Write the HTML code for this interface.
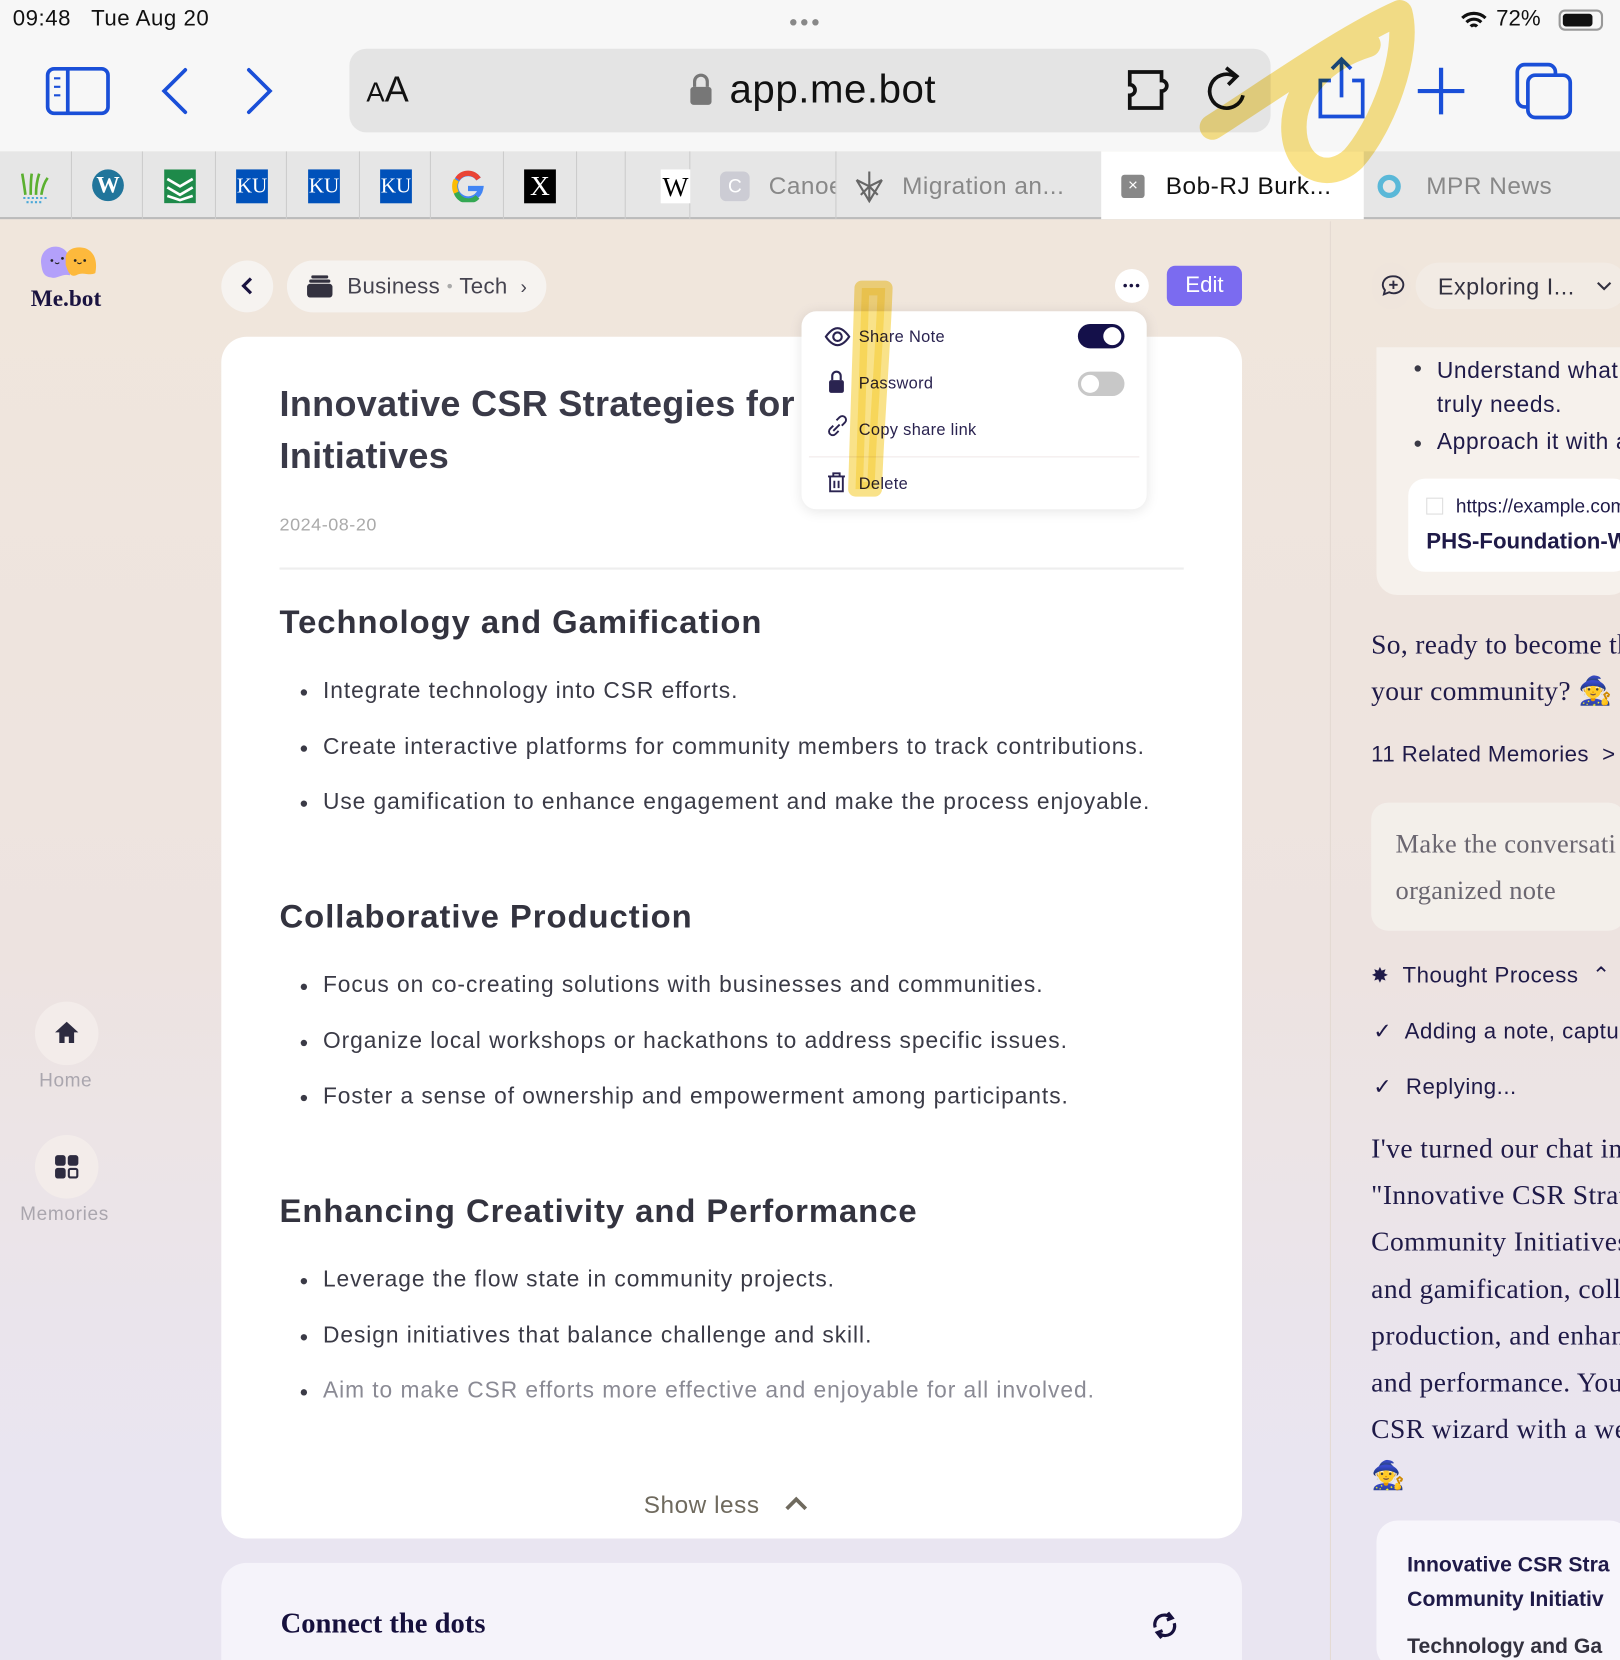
<!DOCTYPE html>
<html><head><meta charset="utf-8"><style>
*{margin:0;padding:0;box-sizing:border-box}
html,body{width:1620px;height:1660px;overflow:hidden;background:#f0e6dc}
#w{position:absolute;left:0;top:0;width:1530px;height:1568px;transform:scale(1.058824);transform-origin:0 0;font-family:"Liberation Sans",sans-serif;overflow:hidden;background:linear-gradient(#f0e6dc 220px,#ede3e0 900px,#e9e5f1 1400px)}
.a{position:absolute}
.ser{font-family:"Liberation Serif",serif}
.b{position:absolute;font-size:21.5px;color:#3a3a46;letter-spacing:.9px;white-space:nowrap}
.b:before{content:"";position:absolute;left:-21px;top:11px;width:6px;height:6px;border-radius:50%;background:#3a3a46}
.h{position:absolute;left:264px;font-size:31px;font-weight:bold;color:#33333f;letter-spacing:.9px}
.mi{position:absolute;left:811px;font-size:15.5px;color:#2a2350;letter-spacing:.3px}
</style></head><body><div id="w">
<div class="a" style="left:0;top:0;width:1530px;height:143px;background:#f7f7f7"></div>
<div class="a" style="left:12px;top:6px;font-size:21px;color:#111;letter-spacing:.5px">09:48&nbsp;&nbsp;&nbsp;Tue Aug 20</div>
<div class="a" style="left:745px;top:12px;font-size:14px;color:#888;letter-spacing:2px">●●●</div>
<div class="a" style="left:1413px;top:6px;font-size:21px;color:#111">72%</div>
<svg class="a" style="left:1378px;top:8px" width="30" height="22"><path d="M3 9a16 16 0 0 1 22 0M7 13a10 10 0 0 1 14 0M11 17a4 4 0 0 1 6 0" stroke="#111" stroke-width="3" fill="none"/></svg>
<div class="a" style="left:1472px;top:9px;width:42px;height:20px;border:2px solid #999;border-radius:6px"><div style="margin:2px;width:28px;height:12px;background:#111;border-radius:3px"></div></div>
<svg class="a" style="left:40px;top:60px" width="460" height="60">
<rect x="5" y="5" width="57" height="42" rx="6" stroke="#1a4fd8" stroke-width="3.5" fill="none"/><line x1="24" y1="5" x2="24" y2="47" stroke="#1a4fd8" stroke-width="3.5"/><path d="M11 14h6M11 22h6M11 30h6" stroke="#1a4fd8" stroke-width="2"/>
<path d="M135 6l-20 20 20 20M195 6l20 20-20 20" stroke="#1a4fd8" stroke-width="3.5" fill="none" stroke-linecap="round"/></svg>
<div class="a" style="left:330px;top:46px;width:870px;height:79px;background:#e4e4e4;border-radius:16px"></div>
<div class="a" style="left:346px;top:66px;font-size:34px;color:#111"><span style="font-size:26px">A</span>A</div>
<svg class="a" style="left:651px;top:68px" width="22" height="32"><path d="M5 14V9a6 6 0 0 1 12 0v5" stroke="#777" stroke-width="3" fill="none"/><rect x="1" y="14" width="20" height="17" rx="3" fill="#777"/></svg>
<div class="a" style="left:689px;top:64px;font-size:38px;color:#111;letter-spacing:.5px">app.me.bot</div>
<svg class="a" style="left:1060px;top:58px" width="130" height="52"><path d="M7 10h30v8a5 5 0 0 1 0 10v16H7V32a5 5 0 0 0 0-10z" stroke="#111" stroke-width="3.5" fill="none"/><path d="M114 32a16 16 0 1 1-8-18" stroke="#111" stroke-width="3.5" fill="none"/><path d="M98 6l10 8-8 8" stroke="#111" stroke-width="3.5" fill="none"/></svg>
<svg class="a" style="left:1240px;top:52px" width="260" height="64"><path d="M17 24H7v34h40V24H37M27 40V4M18 13l9-9 9 9" stroke="#1a4fd8" stroke-width="3.5" fill="none"/><path d="M121 12v44M99 34h44" stroke="#1a4fd8" stroke-width="4"/><rect x="193" y="9" width="36" height="40" rx="7" stroke="#1a4fd8" stroke-width="3.5" fill="none"/><rect x="203" y="19" width="40" height="40" rx="7" stroke="#1a4fd8" stroke-width="3.5" fill="#f7f7f7"/></svg>
<div class="a" style="left:0;top:143px;width:1530px;height:64px;background:#e6e6e6;border-bottom:2px solid #bbb"></div>
<div class="a" style="left:1040px;top:143px;width:248px;height:64px;background:#fff"></div>
<div class="a" style="top:143px;height:64px;left:67px;border-left:1px solid #ccc;width:68px;border-right:1px solid #ccc"></div>
<div class="a" style="top:143px;height:64px;left:203px;border-left:1px solid #ccc;width:68px;border-right:1px solid #ccc"></div>
<div class="a" style="top:143px;height:64px;left:339px;border-left:1px solid #ccc;width:68px;border-right:1px solid #ccc"></div>
<div class="a" style="top:143px;height:64px;left:475px;border-left:1px solid #ccc;width:70px;border-right:1px solid #ccc"></div>
<div class="a" style="top:143px;height:64px;left:590px;border-left:1px solid #ccc;width:62px;border-right:1px solid #ccc"></div>
<div class="a" style="top:143px;height:64px;left:789px;border-left:1px solid #ccc;width:1px"></div>
<svg class="a" style="left:18px;top:158px" width="32" height="36"><path d="M6 26C5 18 4 12 3 6M11 26c0-8 0-14 1-20M16 26c0-8 1-14 3-20M21 26c1-6 3-12 6-16" stroke="#5bb030" stroke-width="2.5" fill="none"/><path d="M4 29h22M7 33h16" stroke="#4aa8d8" stroke-width="2" stroke-dasharray="2 2"/></svg>
<div class="a" style="left:87px;top:160px;width:30px;height:30px;border-radius:50%;background:#21759b;color:#fff;font:bold 22px 'Liberation Serif';text-align:center;line-height:30px">W</div>
<svg class="a" style="left:155px;top:160px" width="30" height="32"><rect width="30" height="32" fill="#1e8a4a"/><path d="M3 9l12 7 12-7M3 17l12 7 12-7M3 25l12 4 12-4" stroke="#fff" stroke-width="2.5" fill="none"/></svg>
<div class="a" style="left:223px;top:160px;width:30px;height:32px;background:#0051ba;color:#fff;font:20px 'Liberation Serif';text-align:center;line-height:32px">KU</div>
<div class="a" style="left:291px;top:160px;width:30px;height:32px;background:#0051ba;color:#fff;font:20px 'Liberation Serif';text-align:center;line-height:32px">KU</div>
<div class="a" style="left:359px;top:160px;width:30px;height:32px;background:#0051ba;color:#fff;font:20px 'Liberation Serif';text-align:center;line-height:32px">KU</div>
<svg class="a" style="left:427px;top:161px" width="30" height="30"><path d="M25 8A12 12 0 1 0 27 17H15" stroke="#4285f4" stroke-width="5" fill="none"/><path d="M25 8A12 12 0 0 0 5 8" stroke="#ea4335" stroke-width="5" fill="none"/><path d="M4 9a12 12 0 0 0 0 12" stroke="#fbbc05" stroke-width="5" fill="none"/><path d="M4 21a12 12 0 0 0 20 4" stroke="#34a853" stroke-width="5" fill="none"/></svg>
<div class="a" style="left:495px;top:160px;width:30px;height:32px;background:#000;color:#fff;font:26px 'Liberation Serif';text-align:center;line-height:32px">X</div>
<div class="a" style="left:624px;top:160px;width:28px;height:32px;background:#fff;color:#000;font:26px 'Liberation Serif';text-align:center;line-height:34px">W</div>
<div class="a" style="left:680px;top:162px;width:28px;height:28px;background:#ccccd4;border-radius:6px;color:#fff;text-align:center;line-height:28px;font-size:18px">C</div>
<div class="a" style="left:726px;top:162px;font-size:23px;color:#888;width:63px;overflow:hidden;white-space:nowrap;letter-spacing:.5px">Canoe</div>
<svg class="a" style="left:806px;top:160px" width="30" height="32"><path d="M15 2v28M3 10l12 20 12-20M3 10l12 6 12-6M7 24l8-8 8 8" stroke="#666" stroke-width="2" fill="none"/></svg>
<div class="a" style="left:852px;top:162px;font-size:23px;color:#888;letter-spacing:.5px">Migration an...</div>
<div class="a" style="left:1059px;top:165px;width:22px;height:22px;background:#888;border-radius:3px;color:#fff;text-align:center;font-size:16px;line-height:22px">×</div>
<div class="a" style="left:1101px;top:162px;font-size:23px;color:#111;letter-spacing:.5px">Bob-RJ Burk...</div>
<div class="a" style="left:1301px;top:165px;width:22px;height:22px;border:5px solid #5ab8d8;border-radius:50%"></div>
<div class="a" style="left:1347px;top:162px;font-size:23px;color:#888;letter-spacing:.5px">MPR News</div>
<div class="a" style="left:1256px;top:209px;width:1px;height:1360px;background:#e4dad2"></div>
<svg class="a" style="left:32px;top:232px" width="64" height="38"><path d="M7 18C5 6 14 0 22 1 32 2 36 12 34 28 26 26 22 32 16 30 10 29 8 26 7 18z" fill="#b3a0fa"/><path d="M30 10C32 2 42 0 50 3 58 7 60 16 58 26 52 29 46 24 40 28 34 30 32 24 30 18z" fill="#fdb93c"/><circle cx="17" cy="14" r="1.3" fill="#222"/><circle cx="27" cy="12" r="1.3" fill="#222"/><circle cx="39" cy="14" r="1.3" fill="#222"/><circle cx="48" cy="14" r="1.3" fill="#222"/><path d="M20 16q2 2 4 0M41 16q2 2 4 0" stroke="#222" stroke-width="1" fill="none"/></svg>
<div class="a ser" style="left:29px;top:269px;font-size:22px;font-weight:bold;color:#1a1340">Me.bot</div>
<div class="a" style="left:33px;top:946px;width:60px;height:60px;border-radius:50%;background:#f3ecea"></div>
<svg class="a" style="left:51px;top:963px" width="24" height="24"><path d="M12 2L1 12h4v10h5v-6h4v6h5V12h4z" fill="#2d2b40"/></svg>
<div class="a" style="left:37px;top:1010px;font-size:18px;color:#aaa6ae;letter-spacing:.5px">Home</div>
<div class="a" style="left:33px;top:1072px;width:60px;height:60px;border-radius:50%;background:#f3ecea"></div>
<svg class="a" style="left:51px;top:1090px" width="24" height="24"><rect x="1" y="1" width="10" height="10" rx="2.5" fill="#2d2b40"/><rect x="13" y="1" width="10" height="10" rx="2.5" fill="#2d2b40"/><rect x="1" y="13" width="10" height="10" rx="2.5" fill="#2d2b40"/><rect x="14" y="14" width="8" height="8" rx="1.5" stroke="#2d2b40" stroke-width="2" fill="none"/></svg>
<div class="a" style="left:19px;top:1136px;font-size:18px;color:#aaa6ae;letter-spacing:.6px">Memories</div>
<div class="a" style="left:209px;top:246px;width:49px;height:49px;border-radius:50%;background:#f6f3f0"></div>
<svg class="a" style="left:226px;top:260px" width="16" height="20"><path d="M11 3l-7 7 7 7" stroke="#1a1340" stroke-width="3" fill="none"/></svg>
<div class="a" style="left:271px;top:246px;width:245px;height:49px;border-radius:25px;background:#f6f3f0"></div>
<svg class="a" style="left:289px;top:260px" width="26" height="22"><rect x="5" y="0" width="16" height="3" rx="1.5" fill="#33313f"/><rect x="3" y="4" width="20" height="3" rx="1.5" fill="#33313f"/><rect x="1" y="8" width="24" height="13" rx="3" fill="#33313f"/></svg>
<div class="a" style="left:328px;top:259px;font-size:21px;color:#45434f;letter-spacing:.3px">Business <span style="color:#aaa;font-size:10px;vertical-align:4px">●</span> Tech <span style="font-size:18px;margin-left:6px">›</span></div>
<div class="a" style="left:1053px;top:254px;width:32px;height:32px;border-radius:50%;background:#fff;text-align:center;font-size:8px;line-height:32px;color:#1a1340;letter-spacing:1px">●●●</div>
<div class="a" style="left:1102px;top:251px;width:71px;height:38px;border-radius:8px;background:#7b6bf0;color:#fff;font-size:21px;text-align:center;line-height:38px">Edit</div>
<div class="a" style="left:209px;top:318px;width:964px;height:1135px;background:#fff;border-radius:24px"></div>
<div class="a" style="left:264px;top:358px;font-size:34px;font-weight:bold;color:#3a3a48;line-height:49px;letter-spacing:.3px">Innovative CSR Strategies for Community<br>Initiatives</div>
<div class="a" style="left:264px;top:486px;font-size:17px;color:#aaa;letter-spacing:.5px">2024-08-20</div>
<div class="a" style="left:264px;top:536px;width:854px;height:2px;background:#eee"></div>
<div class="h" style="top:570px">Technology and Gamification</div>
<div class="b" style="left:305px;top:640px">Integrate technology into CSR efforts.</div>
<div class="b" style="left:305px;top:693px">Create interactive platforms for community members to track contributions.</div>
<div class="b" style="left:305px;top:745px">Use gamification to enhance engagement and make the process enjoyable.</div>
<div class="h" style="top:848px">Collaborative Production</div>
<div class="b" style="left:305px;top:918px">Focus on co-creating solutions with businesses and communities.</div>
<div class="b" style="left:305px;top:971px">Organize local workshops or hackathons to address specific issues.</div>
<div class="b" style="left:305px;top:1023px">Foster a sense of ownership and empowerment among participants.</div>
<div class="h" style="top:1126px">Enhancing Creativity and Performance</div>
<div class="b" style="left:305px;top:1196px">Leverage the flow state in community projects.</div>
<div class="b" style="left:305px;top:1249px">Design initiatives that balance challenge and skill.</div>
<div class="b" style="left:305px;top:1301px;color:#8a8a94">Aim to make CSR efforts more effective and enjoyable for all involved.</div>
<div class="a" style="left:608px;top:1408px;font-size:23px;color:#6f6a5e;letter-spacing:.5px">Show less</div>
<svg class="a" style="left:740px;top:1410px" width="24" height="20"><path d="M3 15l9-9 9 9" stroke="#6f6a5e" stroke-width="3.5" fill="none"/></svg>
<div class="a" style="left:209px;top:1476px;width:964px;height:120px;background:#f5f3fa;border-radius:24px"></div>
<div class="a ser" style="left:265px;top:1518px;font-size:27px;font-weight:bold;color:#16103d">Connect the dots</div>
<svg class="a" style="left:1086px;top:1520px" width="28" height="30"><path d="M5 17a9 9 0 0 1 15-9M23 13a9 9 0 0 1-15 9" stroke="#16103d" stroke-width="3" fill="none"/><path d="M17 3l4 5-5 2M11 27l-4-5 5-2" stroke="#16103d" stroke-width="3" fill="none"/></svg>
<div class="a" style="left:757px;top:294px;width:326px;height:187px;background:#fff;border-radius:14px;box-shadow:0 2px 12px rgba(0,0,0,.1)"></div>
<svg class="a" style="left:778px;top:307px" width="26" height="170"><path d="M2 11s5-8 11-8 11 8 11 8-5 8-11 8-11-8-11-8z" stroke="#2a2350" stroke-width="2" fill="none"/><circle cx="13" cy="11" r="4" stroke="#2a2350" stroke-width="2" fill="none"/><rect x="5" y="52" width="14" height="12" rx="2" fill="#2a2350"/><path d="M8 52v-4a4 4 0 0 1 8 0v4" stroke="#2a2350" stroke-width="2" fill="none"/><path d="M9 100l6-6m-3-4l3-3a3 3 0 0 1 5 5l-3 3m-8 0l-3 3a3 3 0 0 0 5 5l3-3" stroke="#2a2350" stroke-width="1.8" fill="none"/><path d="M4 143h16M9 143v-3h6v3M6 143v14h12v-14M10 147v7M14 147v7" stroke="#2a2350" stroke-width="1.8" fill="none"/></svg>
<div class="mi" style="top:310px">Share Note</div>
<div class="mi" style="top:354px">Password</div>
<div class="mi" style="top:398px">Copy share link</div>
<div class="mi" style="top:449px">Delete</div>
<div class="a" style="left:764px;top:431px;width:312px;height:1px;background:#f0e8e8"></div>
<div class="a" style="left:1018px;top:306px;width:44px;height:23px;border-radius:12px;background:#14104a"><div style="position:absolute;right:3px;top:3px;width:17px;height:17px;border-radius:50%;background:#fff"></div></div>
<div class="a" style="left:1018px;top:351px;width:44px;height:23px;border-radius:12px;background:#c8c8c8"><div style="position:absolute;left:3px;top:3px;width:17px;height:17px;border-radius:50%;background:#fff"></div></div>
<div class="a" style="left:1296px;top:248px;width:36px;height:44px;border-radius:18px;background:#efe5dc"></div>
<svg class="a" style="left:1304px;top:259px" width="24" height="22"><path d="M12 2a9 8 0 1 1-4 15l-5 2 1-4a9 8 0 0 1 8-13zM12 6v8M8 10h8" stroke="#2d2b40" stroke-width="1.8" fill="none"/></svg>
<div class="a" style="left:1337px;top:248px;width:200px;height:44px;border-radius:22px;background:#f2ebe4"></div>
<div class="a" style="left:1358px;top:258px;font-size:22px;color:#33313f;letter-spacing:.5px">Exploring I...</div>
<svg class="a" style="left:1507px;top:264px" width="16" height="12"><path d="M2 3l6 6 6-6" stroke="#33313f" stroke-width="2" fill="none"/></svg>
<div class="a" style="left:1300px;top:328px;width:240px;height:234px;background:#f6f1ec;border-radius:0 0 20px 20px"></div>
<div class="b" style="left:1357px;top:334px;color:#1f1a48;line-height:32px;letter-spacing:.6px">Understand what<br>truly needs.</div>
<div class="b" style="left:1357px;top:405px;color:#1f1a48;letter-spacing:.6px">Approach it with a</div>
<div class="a" style="left:1330px;top:452px;width:210px;height:88px;background:#fff;border-radius:16px"></div>
<div class="a" style="left:1347px;top:470px;width:16px;height:16px;border:1px solid #ddd"></div>
<div class="a" style="left:1375px;top:468px;font-size:18px;color:#1f1a48;white-space:nowrap">https://example.com</div>
<div class="a" style="left:1347px;top:500px;font-size:21px;font-weight:bold;color:#1f1a48;white-space:nowrap">PHS-Foundation-W</div>
<div class="a ser" style="left:1295px;top:587px;font-size:26px;color:#1f1a48;line-height:44px;white-space:nowrap;letter-spacing:.3px">So, ready to become the<br>your community? 🧙</div>
<div class="a" style="left:1295px;top:701px;font-size:21px;color:#1f1a48;white-space:nowrap;letter-spacing:.4px">11 Related Memories &nbsp;&gt;</div>
<div class="a" style="left:1295px;top:758px;width:240px;height:121px;background:#f3efea;border-radius:16px"></div>
<div class="a ser" style="left:1318px;top:776px;font-size:25px;color:#6a6670;line-height:44px;white-space:nowrap;letter-spacing:.3px">Make the conversati<br>organized note</div>
<div class="a" style="left:1295px;top:909px;font-size:21px;color:#1f1a48;white-space:nowrap;letter-spacing:.5px"><span style="font-size:20px">✸</span>&nbsp; Thought Process &nbsp;⌃</div>
<div class="a" style="left:1297px;top:962px;font-size:21px;color:#1f1a48;white-space:nowrap;letter-spacing:.5px">✓&nbsp; Adding a note, captu</div>
<div class="a" style="left:1297px;top:1014px;font-size:21px;color:#1f1a48;white-space:nowrap;letter-spacing:.5px">✓&nbsp; Replying...</div>
<div class="a ser" style="left:1295px;top:1063px;font-size:26px;color:#1f1a48;line-height:44.2px;white-space:nowrap;letter-spacing:.4px">I've turned our chat int<br>"Innovative CSR Strate<br>Community Initiatives<br>and gamification, colla<br>production, and enhan<br>and performance. You<br>CSR wizard with a wel<br>🧙</div>
<div class="a" style="left:1300px;top:1436px;width:240px;height:140px;background:#f7f5fb;border-radius:20px"></div>
<div class="a" style="left:1329px;top:1462px;font-size:20px;font-weight:bold;color:#1f1a48;line-height:33px;white-space:nowrap">Innovative CSR Stra<br>Community Initiativ</div>
<div class="a" style="left:1329px;top:1544px;font-size:20px;font-weight:bold;color:#33313f;white-space:nowrap">Technology and Ga</div>
<svg class="a" style="left:0;top:0;mix-blend-mode:multiply" width="1530" height="1568"><g stroke="#f5cf3a" stroke-opacity=".6" fill="none" stroke-linecap="round" stroke-linejoin="round"><path d="M1145 120C1200 85 1270 35 1322 12C1332 50 1305 120 1278 150C1255 172 1222 160 1222 120C1222 85 1250 55 1292 42" stroke-width="24"/><path d="M822 272L836 272C834 330 828 400 826 462L808 462C810 400 812 330 814 272Z" stroke-width="14" fill="#f5cf3a" fill-opacity=".6"/></g></svg>
</div></body></html>
